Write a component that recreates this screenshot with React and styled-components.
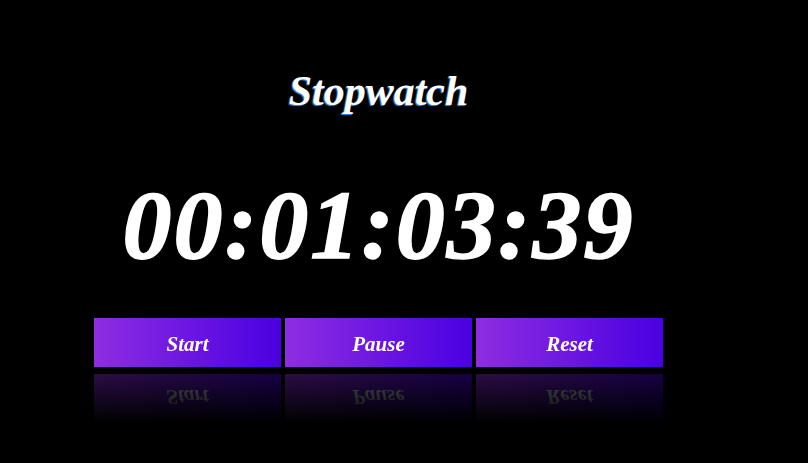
import React from "react";
import styled, { createGlobalStyle } from "styled-components";

const Global = createGlobalStyle`
  html, body { margin: 0; padding: 0; background: #000; }
  body { width: 808px; height: 463px; overflow: hidden; font-family: "Liberation Serif", serif; }
`;

const Page = styled.div`
  width: 808px;
  height: 463px;
  background: #000;
  box-sizing: border-box;
  padding: 70px 0 0 94px;
`;

const Watch = styled.div`
  width: 569px;
  display: flex;
  flex-direction: column;
  align-items: center;
`;

const Title = styled.h1`
  margin: 0;
  font-family: "Liberation Serif", serif;
  font-style: italic;
  font-weight: 700;
  font-size: 42px;
  line-height: 42px;
  color: #fff;
  text-shadow: -1px 1px 1px #3b8bff;
`;

const Display = styled.div`
  margin-top: 64px;
  font-family: "Liberation Serif", serif;
  font-style: italic;
  font-weight: 700;
  font-size: 98px;
  line-height: 98px;
  letter-spacing: 2px;
  color: #fff;
  -webkit-text-stroke: 1.5px #fff;
`;

const Buttons = styled.div`
  margin-top: 44px;
  display: grid;
  grid-template-columns: repeat(3, 1fr);
  gap: 4px;
  width: 100%;
`;

const Button = styled.button`
  height: 49px;
  border: none;
  padding: 4px 0 0;
  background: linear-gradient(to right, #8e2de2, #4a00e0);
  color: #fff;
  font-family: "Liberation Serif", serif;
  font-style: italic;
  font-weight: 700;
  font-size: 21px;
  cursor: pointer;
  -webkit-box-reflect: below 7px linear-gradient(transparent, rgba(0, 0, 0, 0.3));
`;

export default function App() {
  return (
    <>
      <Global />
      <Page>
        <Watch>
          <Title>Stopwatch</Title>
          <Display>00:01:03:39</Display>
          <Buttons>
            <Button>Start</Button>
            <Button>Pause</Button>
            <Button>Reset</Button>
          </Buttons>
        </Watch>
      </Page>
    </>
  );
}
